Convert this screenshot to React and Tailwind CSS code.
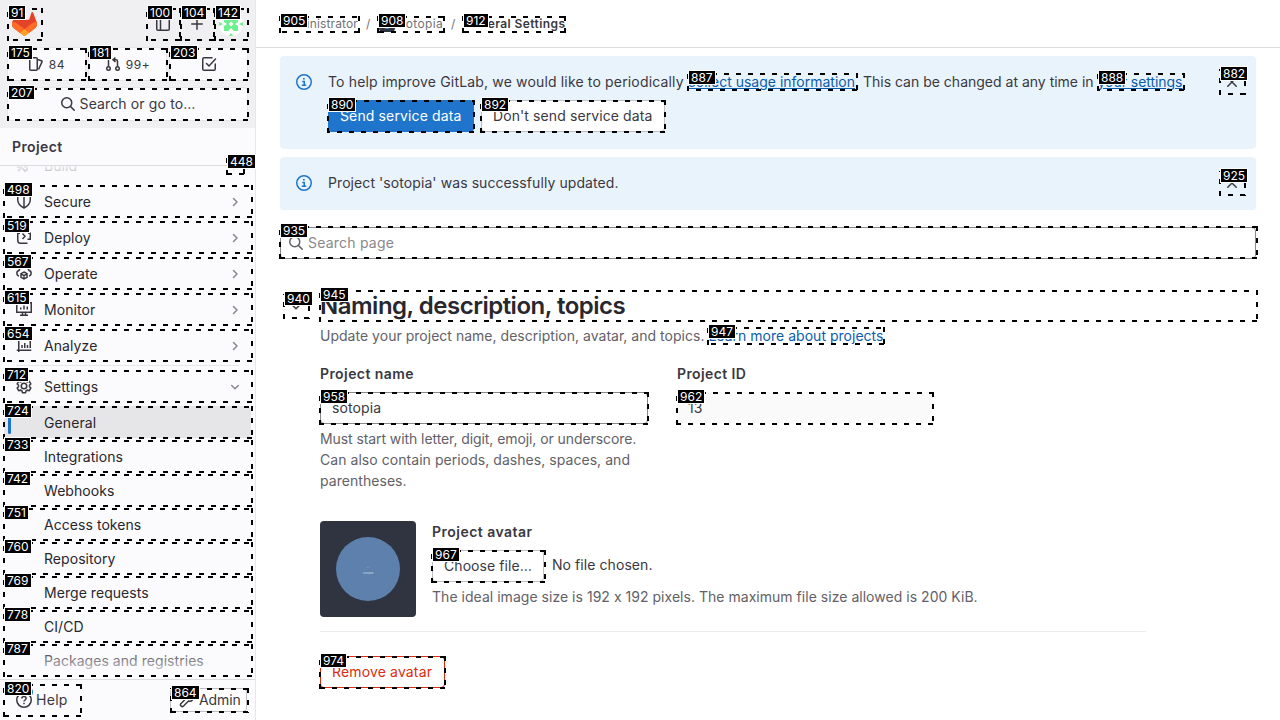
import React from "react";

const stroke = { fill: "none", stroke: "currentColor", strokeWidth: 1.5 };

function Icon({ children, className = "" }) {
  return (
    <svg viewBox="0 0 16 16" className={"h-4 w-4 shrink-0 " + className} {...stroke}>
      {children}
    </svg>
  );
}

const icons = {
  build: <path d="M8 10c3-1 6-4 6-8-4 0-7 2-8 5M6 7H3L1.500 10l4 .5L9 14l2-1.500V10M2 14l2.500-2.500" />,
  shield: <path d="M8 1.500 1.750 3.500V7c0 3.500 2.500 6 6.250 8 3.750-2 6.250-4.500 6.250-8V3.500L8 1.500V15" />,
  deploy: <path d="M12 4.250h2.250v6H11.500M4 4.250H1.750V11c0 2 .9 3.250 2.500 3.250H11.500M6.500 4.500 9 7.250 6.500 10" />,
  operate: (
    <>
      <path d="M3 11C.3 10.500 0 6 3 5.500 4 1.500 12 1.500 13 5.500c3 .5 2.700 5 0 5.500" />
      <path d="m8 7 3 1.700v3.600L8 14l-3-1.700V8.700L8 7Zm-3 1.900 3 1.700 3-1.700M8 10.600V14" />
    </>
  ),
  monitor: <path d="M.75 1.750h14.500v9.500H.75zM4 14.250h8M6.500 11v3M9.500 11v3M4.750 6.500v2M8 4.500v4M11.250 5.500v3" />,
  analyze: <path d="M2.750 1v14M.75 13.250h14.500M6 8v3M8.750 6v5M11.500 8v3M14.250 4v7" />,
  settings: (
    <>
      <path d="M6.500 1.250h3l.6 1.900 1.300.7 1.900-.5 1.500 2.600L13.500 7.300v1.400l1.300 1.350-1.500 2.600-1.900-.5-1.300.7-.6 1.900h-3l-.6-1.900-1.300-.7-1.900.5-1.500-2.600L2.500 8.700V7.300L1.200 5.950l1.500-2.600 1.900.5 1.300-.7z" />
      <circle cx="8" cy="8" r="2.750" />
    </>
  ),
  search: <path d="M11.750 6.750a5 5 0 1 1-10 0 5 5 0 0 1 10 0ZM10.400 10.400 14.250 14.250" strokeLinecap="round" />,
  right: <path d="m6.500 4.500 3.500 3.500-3.500 3.500" strokeLinecap="round" strokeLinejoin="round" />,
  down: <path d="m4.750 6.500 3.250 3.250 3.250-3.250" strokeLinecap="round" strokeLinejoin="round" />,
  close: <path d="m3.750 3.750 8.500 8.500M12.250 3.750l-8.500 8.500" strokeLinecap="round" />,
  plus: <path d="M8 2.750v10.500M2.750 8h10.500" strokeLinecap="round" />,
  panel: <path d="M3 1.750h10c.7 0 1.250.55 1.250 1.250v10c0 .7-.55 1.250-1.250 1.250H3c-.7 0-1.250-.55-1.250-1.250V3c0-.7.55-1.250 1.250-1.250ZM5.500 2v12" />,
  issues: <path d="M2.750 1.750h5.500c.6 0 1 .4 1 1v10.500c0 .6-.4 1-1 1h-5.500c-.6 0-1-.4-1-1V2.750c0-.6.4-1 1-1ZM9.500 3.500l3.900 1.200c.5.200.8.7.6 1.200L10.500 13.500" />,
  merge: (
    <>
      <circle cx="3.500" cy="12.500" r="1.750" />
      <circle cx="12.500" cy="12.500" r="1.750" />
      <path d="M3.500 2v8.750M8.500 3.750H11c1 0 1.500.6 1.500 1.500v5.500M10.500 1.500 8 3.750 10.500 6" />
    </>
  ),
  todo: <path d="M14.250 8v5c0 .7-.5 1.250-1.250 1.250H3c-.7 0-1.250-.5-1.250-1.250V3c0-.7.5-1.250 1.250-1.250h8M5.500 7.500 8 10l6.500-7" strokeLinecap="round" />,
  help: (
    <>
      <circle cx="8" cy="8" r="7.250" />
      <path d="M5.900 6.500c0-2.700 4.200-2.700 4.200 0 0 1.500-2.100 1.500-2.100 3M8 10.700v1.500" />
    </>
  ),
  admin: <path d="M14.200 4.500 11.700 6.200 9.800 4.300l1.700-2.500C8.500 1 6 3.500 7 6.500L1.800 11.700c-1.200 1.500 1 3.700 2.500 2.500L9.500 9c3 1 5.500-1.500 4.700-4.500Z" strokeLinejoin="round" />,
  info: (
    <>
      <circle cx="8" cy="8" r="7.250" />
      <path d="M6.250 7.500H8.250v4M5.750 11.250h4.500M7 4.750h1.750" />
    </>
  ),
};

function Logo() {
  return (
    <svg viewBox="0 0 25 24" className="h-6 w-[25px]">
      <path fill="#E24329" d="m24.507 9.500-.034-.09L21.082.562a.896.896 0 0 0-1.694.091l-2.290 7.010H7.825L5.535.653a.898.898 0 0 0-1.694-.09L.451 9.411.416 9.500a6.297 6.297 0 0 0 2.090 7.278l.012.010.030.022 5.160 3.867 2.560 1.935 1.554 1.176a1.051 1.051 0 0 0 1.268 0l1.555-1.176 2.560-1.935 5.197-3.890.014-.010A6.297 6.297 0 0 0 24.507 9.500Z" />
      <path fill="#FC6D26" d="m24.507 9.500-.034-.09a11.440 11.440 0 0 0-4.560 2.051l-7.447 5.632 4.742 3.584 5.197-3.890.014-.010A6.297 6.297 0 0 0 24.507 9.500Z" />
      <path fill="#FCA326" d="m7.707 20.677 2.560 1.935 1.555 1.176a1.051 1.051 0 0 0 1.268 0l1.555-1.176 2.560-1.935-4.743-3.584-4.755 3.584Z" />
      <path fill="#FC6D26" d="M5.010 11.461a11.430 11.430 0 0 0-4.560-2.050L.416 9.500a6.297 6.297 0 0 0 2.090 7.278l.012.010.030.022 5.160 3.867 4.745-3.584-7.444-5.632Z" />
    </svg>
  );
}

function UserAvatar() {
  return (
    <svg viewBox="0 0 24 24" className="h-6 w-6 rounded-full bg-white">
      <path
        fill="#6BF08C"
        d="M5 5h5l2 3 2-3h5v5l-3 2 3 2v5h-4l-3-3-3 3H5v-5l3-2-3-2zM0 10l4 2-4 2zM24 10l-4 2 4 2zM10 0l2 3 2-3zM10 24l2-3 2 3z"
      />
      <path fill="#fff" d="m12 9.500 2.500 2.500-2.500 2.500L9.500 12z" />
    </svg>
  );
}

const sections = [
  ["Build", "build"],
  ["Secure", "shield"],
  ["Deploy", "deploy"],
  ["Operate", "operate"],
  ["Monitor", "monitor"],
  ["Analyze", "analyze"],
];

const settings = ["Integrations", "Webhooks", "Access tokens", "Repository", "Merge requests", "CI/CD", "Packages and registries"];

function NavItem({ label, icon, open }) {
  return (
    <div className="flex h-8 shrink-0 items-center pl-3 pr-2 text-[#28272d]">
      <Icon className="mr-3 text-[#3a383f]">{icons[icon]}</Icon>
      <span className="grow pt-0.5 tracking-[0.08px]">{label}</span>
      <Icon className="mt-px text-[#89888d]">{open ? icons.down : icons.right}</Icon>
    </div>
  );
}

function Counter({ icon, text }) {
  return (
    <div className="flex h-8 flex-1 items-center justify-center gap-[5px] rounded bg-[#fbfafd] text-xs tracking-[0.6px] shadow-[0_0_0_1px_#e7e7ea]">
      <Icon>{icons[icon]}</Icon>
      {text && <span className="pt-0.5">{text}</span>}
    </div>
  );
}

function Sidebar() {
  return (
    <aside className="flex h-full w-64 shrink-0 flex-col border-r border-[#e7e6ea] bg-[#fbfafd]">
      <div className="h-32 shrink-0 bg-[#f0f0f3] px-2 pt-2 text-[#3a383f]">
        <div className="flex h-8 items-center pl-1 pr-1">
          <Logo />
          <div className="ml-auto flex items-center">
            <Icon className="mr-[18px]">{icons.panel}</Icon>
            <Icon className="mr-3.5">{icons.plus}</Icon>
            <UserAvatar />
          </div>
        </div>
        <div className="mt-2 flex gap-1">
          <Counter icon="issues" text="84" />
          <Counter icon="merge" text="99+" />
          <Counter icon="todo" />
        </div>
        <div className="mt-2 flex h-8 items-center justify-center gap-1 rounded bg-[#fbfafd] tracking-[0.13px] shadow-[0_0_0_1px_#e7e7ea]">
          <Icon>{icons.search}</Icon>
          <span>Search or go to…</span>
        </div>
      </div>
      <div className="flex h-[38px] shrink-0 items-center border-b border-[#dcdcde] px-3 font-semibold tracking-[0.4px] text-[#3a383f]">Project</div>
      <nav className="relative min-h-0 grow overflow-hidden px-1">
        <div className="-mt-[17px] flex flex-col gap-1">
          {sections.map(([label, icon]) => (
            <NavItem key={label} label={label} icon={icon} />
          ))}
        </div>
        <div className="mx-3 mt-1 border-t border-[#e7e6ea]" />
        <div className="mt-1">
          <NavItem label="Settings" icon="settings" open />
        </div>
        <div className="mt-1 flex h-8 items-center rounded bg-[#e6e6e8] pl-1 text-[#28272d]">
          <span className="mr-[33px] h-6 w-[3px] rounded bg-[#1f75cb]" />
          <span className="pt-0.5 tracking-[0.1px]">General</span>
        </div>
        <div className="mt-px pt-px tracking-[0.05px] text-[#28272d]">
          {settings.map((s) => (
            <div key={s} className="flex h-[34px] items-center pl-10">{s}</div>
          ))}
        </div>
        <div className="absolute inset-x-0 top-0 h-8 bg-gradient-to-b from-[#fbfafd]/90 to-[#fbfafd]/0" />
        <div className="absolute inset-x-0 bottom-0 h-8 bg-gradient-to-t from-[#fbfafd] to-[#fbfafd]/0" />
      </nav>
      <div className="flex h-[41px] shrink-0 items-center border-t border-[#dcdcde] pl-4 pr-2 text-[#3a383f]">
        <span className="relative flex items-center gap-1 tracking-[0.3px]">
          <Icon>{icons.help}</Icon>
          <span className="absolute -top-0.5 left-[9px] h-2 w-2 rounded-full bg-[#1f75cb]" />
          Help
        </span>
        <span className="ml-auto flex h-6 w-[77px] items-center gap-1 rounded border border-[#bfbfc3] bg-white pl-2 tracking-[-0.1px]">
          <Icon>{icons.admin}</Icon>
          Admin
        </span>
      </div>
    </aside>
  );
}

function Alert({ children, className }) {
  return (
    <section className={"flex rounded bg-[#e9f3fc] px-4 py-4 " + className}>
      <Icon className="mr-4 mt-0.5 text-[#1f75cb]">{icons.info}</Icon>
      <div className="grow leading-5">{children}</div>
      <Icon className="mt-0.5 text-[#3a383f]">{icons.close}</Icon>
    </section>
  );
}

function Main() {
  return (
    <main className="min-w-0 grow bg-white">
      <header className="flex h-12 items-center gap-2 border-b border-[#dcdcde] pl-6 text-xs text-[#737278]">
        <span className="w-[78px] tracking-[0.15px]">Administrator</span>
        <span className="w-[5px]">/</span>
        <span className="flex w-[64px] items-center gap-1">
          <span className="flex h-4 w-4 shrink-0 items-center justify-center rounded-sm bg-[#2f3440]">
            <span className="h-2.5 w-2.5 rounded-full bg-[#5d80ac]" />
          </span>
          <span className="tracking-[0.35px]">sotopia</span>
        </span>
        <span className="w-1">/</span>
        <span className="font-semibold tracking-[0.42px] text-[#3a383f]">General Settings</span>
      </header>
      <div className="px-6 pt-2">
        <Alert className="h-[93px]">
          <p className="whitespace-nowrap">
            <span className="tracking-[0.16px]">To help improve GitLab, we would like to periodically </span>
            <a className="text-[#0b5cad] underline">collect usage information</a>. This can be changed at any time in{" "}
            <a className="tracking-[-0.05px] text-[#0b5cad] underline">your settings</a>
          </p>
          <div className="mt-2 flex gap-[7px] tracking-[0.13px]">
            <span className="flex h-8 w-[146px] items-center rounded bg-[#1f75cb] px-3 text-white">Send service data</span>
            <span className="flex h-8 w-[184px] items-center rounded border border-[#bfbfc3] bg-white px-[11px] tracking-[0.1px]">Don't send service data</span>
          </div>
        </Alert>
        <Alert className="mt-2 h-[53px] tracking-[0.08px]">Project 'sotopia' was successfully updated.</Alert>
        <div className="mt-[17px] flex h-8 items-center gap-1 rounded border border-[#89888d] pl-[7px] text-[#89888d]">
          <Icon className="text-[#626168]">{icons.search}</Icon>
          <span className="tracking-[0.22px]">Search page</span>
        </div>
        <div className="mt-[31px] flex">
          <div className="flex w-10 shrink-0 pl-2 pt-[9px]">
            <Icon>{icons.down}</Icon>
          </div>
          <div className="grow">
            <h1 className="h-8 text-2xl font-semibold leading-8 tracking-[-0.5px] text-[#28272d]">Naming, description, topics</h1>
            <p className="mt-1 leading-5 tracking-[0.02px] text-[#626168]">
              Update your project name, description, avatar, and topics. <a className="text-[#0b5cad]">Learn more about projects</a>
            </p>
            <div className="mt-[18px] flex gap-[29px]">
              <div className="w-[328px]">
                <div className="font-semibold leading-5 tracking-[0.42px]">Project name</div>
                <div className="mt-2 flex h-8 items-center rounded border border-[#89888d] pl-[11px] tracking-[0.1px]">sotopia</div>
                <p className="mt-1 leading-[21px] text-[#626168]">
                  <span className="tracking-[-0.08px]">Must start with letter, digit, emoji, or underscore.</span>{" "}
                  <span className="tracking-[0.05px]">Can also contain periods, dashes, spaces, and parentheses.</span>
                </p>
              </div>
              <div className="w-64">
                <div className="font-semibold leading-5 tracking-[0.4px]">Project ID</div>
                <div className="mt-2 flex h-8 items-center rounded bg-[#fbfafa] pl-[11px]">13</div>
              </div>
            </div>
            <div className="mt-[30px] flex h-[111px] w-[826px] border-b border-[#ececef]">
              <div className="mr-4 flex h-24 w-24 items-center justify-center rounded bg-[#2f3440]">
                <div className="flex h-16 w-16 flex-col items-center justify-center rounded-full bg-[#5d80ac] pt-1 text-[3px] leading-[4px] text-white/70">
                  <span>⌃</span>
                  <span>sotopia</span>
                </div>
              </div>
              <div>
                <div className="pt-px font-semibold leading-5 tracking-[0.48px]">Project avatar</div>
                <div className="mt-2 flex items-center gap-2 tracking-[0.07px]">
                  <span className="flex h-8 w-28 items-center whitespace-nowrap rounded border border-[#bfbfc3] px-[11px]">Choose file…</span>
                  <span className="-mt-0.5">No file chosen.</span>
                </div>
                <p className="mt-[5px] leading-5 tracking-[0.03px] text-[#626168]">The ideal image size is 192 x 192 pixels. The maximum file size allowed is 200 KiB.</p>
              </div>
            </div>
            <span className="mt-6 inline-flex h-8 w-[125px] items-center rounded border border-[#dd2b0e] px-[11px] tracking-[0.15px] text-[#dd2b0e]">Remove avatar</span>
          </div>
        </div>
      </div>
    </main>
  );
}

const marks = [
  ["91", "left-[7px] top-[8px] w-[36px] h-[33px]"],
  ["100", "left-[146px] top-[8px] w-[35px] h-[33px]"],
  ["104", "left-[180px] top-[8px] w-[35px] h-[33px]"],
  ["142", "left-[214px] top-[8px] w-[35px] h-[33px]"],
  ["175", "left-[7px] top-[48px] w-[80px] h-[33px]"],
  ["181", "left-[88px] top-[48px] w-[80px] h-[33px]"],
  ["203", "left-[169px] top-[48px] w-[80px] h-[33px]"],
  ["207", "left-[7px] top-[88px] w-[242px] h-[33px]"],
  ["448", "left-[226px] top-[157px] w-[19px] h-[18px]"],
  ["498", "left-[3px] top-[185px] w-[250px] h-[33px]"],
  ["519", "left-[3px] top-[221px] w-[250px] h-[33px]"],
  ["567", "left-[3px] top-[257px] w-[250px] h-[33px]"],
  ["615", "left-[3px] top-[293px] w-[250px] h-[33px]"],
  ["654", "left-[3px] top-[329px] w-[250px] h-[33px]"],
  ["712", "left-[3px] top-[370px] w-[250px] h-[33px]"],
  ["724", "left-[3px] top-[406px] w-[250px] h-[33px]"],
  ["733", "left-[3px] top-[440px] w-[250px] h-[33px]"],
  ["742", "left-[3px] top-[474px] w-[250px] h-[33px]"],
  ["751", "left-[3px] top-[508px] w-[250px] h-[33px]"],
  ["760", "left-[3px] top-[542px] w-[250px] h-[33px]"],
  ["769", "left-[3px] top-[576px] w-[250px] h-[33px]"],
  ["778", "left-[3px] top-[610px] w-[250px] h-[33px]"],
  ["787", "left-[3px] top-[644px] w-[250px] h-[33px]"],
  ["820", "left-[3px] top-[684px] w-[79px] h-[33px]"],
  ["864", "left-[170px] top-[688px] w-[79px] h-[25px]"],
  ["905", "left-[279px] top-[16px] w-[81px] h-[17px]"],
  ["908", "left-[377px] top-[16px] w-[68px] h-[17px]"],
  ["912", "left-[462px] top-[16px] w-[104px] h-[17px]"],
  ["887", "left-[687px] top-[73px] w-[171px] h-[18px]"],
  ["888", "left-[1097px] top-[73px] w-[88px] h-[18px]"],
  ["882", "left-[1219px] top-[69px] w-[27px] h-[26px]"],
  ["890", "left-[327px] top-[100px] w-[148px] h-[33px]"],
  ["892", "left-[480px] top-[100px] w-[186px] h-[33px]"],
  ["925", "left-[1219px] top-[171px] w-[27px] h-[25px]"],
  ["935", "left-[279px] top-[226px] w-[979px] h-[33px]"],
  ["940", "left-[283px] top-[294px] w-[27px] h-[25px]"],
  ["945", "left-[319px] top-[290px] w-[939px] h-[32px]"],
  ["947", "left-[707px] top-[327px] w-[178px] h-[18px]"],
  ["958", "left-[319px] top-[392px] w-[330px] h-[33px]"],
  ["962", "left-[676px] top-[392px] w-[258px] h-[33px]"],
  ["967", "left-[431px] top-[550px] w-[115px] h-[33px]"],
  ["974", "left-[319px] top-[656px] w-[127px] h-[33px]"],
];

// Dashes of 5px with 7px gaps, running clockwise round the box.
const dashes =
  "[background:repeating-linear-gradient(90deg,#000_0_5px,transparent_5px_12px)_1px_0/100%_2px_no-repeat,repeating-linear-gradient(180deg,#000_0_5px,transparent_5px_12px)_100%_0/2px_100%_no-repeat,repeating-linear-gradient(270deg,#000_0_5px,transparent_5px_12px)_-1px_100%/100%_2px_no-repeat,repeating-linear-gradient(0deg,#000_0_5px,transparent_5px_12px)_0_100%/2px_100%_no-repeat]";

export default function App() {
  return (
    <div className="relative flex h-[720px] w-[1280px] overflow-hidden font-['Inter',sans-serif] text-sm text-[#3a383f] [font-feature-settings:'calt'_0]">
      <Sidebar />
      <Main />
      {marks.map(([id, place]) => (
        <div key={id} className={"pointer-events-none absolute " + dashes + " " + place}>
          <span className="absolute -top-[3px] left-px h-[15px] border border-white bg-black px-0.5 text-xs leading-[13px] text-white">{id}</span>
        </div>
      ))}
    </div>
  );
}
